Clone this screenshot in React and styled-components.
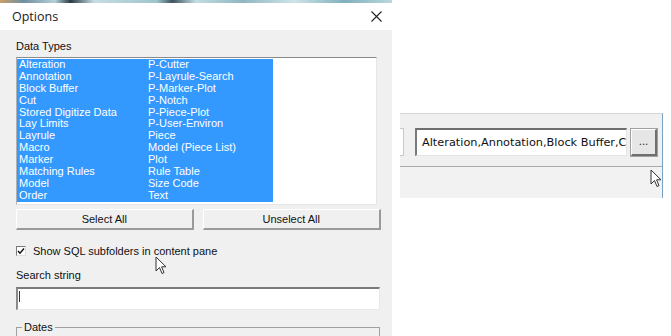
import React from "react";
import styled, { createGlobalStyle } from "styled-components";

const Global = createGlobalStyle`
  html, body { margin: 0; padding: 0; background: #fff; }
  #root { width: 671px; height: 336px; overflow: hidden; }
`;

const UI = `"Liberation Sans", Arial, sans-serif`;

const Page = styled.div`
  position: relative;
  display: flex;
  width: 671px;
  height: 336px;
  background: #fff;
  overflow: hidden;
  font-family: ${UI};
`;

const Dialog = styled.div`
  width: 392px;
  height: 336px;
  display: flex;
  flex-direction: column;
  overflow: hidden;
`;

const TopStrip = styled.div`
  flex-shrink: 0;
  height: 3px;
  background: linear-gradient(90deg, #c9a06a 0%, #6f8fa0 6%, #b5cfd8 14%, #2b3b44 18%, #c7dde3 24%, #9fc4cd 40%, #3e5560 44%, #c4dce2 50%, #8fb7c2 62%, #cfe3e7 75%, #7fb0bd 88%, #bcd8de 100%);
`;

const TitleBar = styled.div`
  flex-shrink: 0;
  height: 27px;
  display: flex;
  align-items: center;
  justify-content: space-between;
  padding: 0 10px 0 12px;
  background: #fff;
`;

const Title = styled.span`
  font-family: "Open Sans", "Noto Sans", sans-serif;
  font-size: 12.5px;
  color: #1a1a1a;
`;

const Body = styled.div`
  flex: 1 0 auto;
  background: #f0f0f0;
  padding: 9px 11px 0 16px;
  display: flex;
  flex-direction: column;
`;

const Label = styled.div`
  flex-shrink: 0;
  font-size: 11px;
  line-height: 14px;
  color: #111;
  margin-top: ${(p) => p.$mt || 0}px;
`;

const ListBox = styled.div`
  flex-shrink: 0;
  margin-top: 4px;
  width: 361px;
  height: 148px;
  box-sizing: border-box;
  background: #fff;
  border-top: 1px solid #8a8a8a;
  border-left: 1px solid #b0b0b0;
  border-right: 1px solid #e6e6e6;
  border-bottom: 1px solid #e6e6e6;
  padding-top: 1px;
`;

const Selection = styled.div`
  width: 256px;
  display: grid;
  grid-template-columns: 129px 1fr;
  grid-auto-flow: column;
  grid-template-rows: repeat(12, 11.9px);
  background: #3399ff;
`;

const Item = styled.div`
  color: #fff;
  font-size: 11px;
  line-height: 11.9px;
  padding-left: 2px;
  white-space: nowrap;
`;

const ButtonRow = styled.div`
  flex-shrink: 0;
  margin-top: 4px;
  display: flex;
  gap: 9px;
`;

const Button = styled.div`
  width: ${(p) => p.$w}px;
  height: 21px;
  box-sizing: border-box;
  display: flex;
  align-items: center;
  justify-content: center;
  font-size: 11px;
  color: #111;
  background: #f0f0f0;
  border-top: 1px solid #fff;
  border-left: 1px solid #fff;
  border-right: 2px solid #9a9a9a;
  border-bottom: 2px solid #9a9a9a;
`;

const CheckRow = styled.div`
  flex-shrink: 0;
  margin-top: 15px;
  display: flex;
  align-items: center;
  gap: 7px;
  font-size: 11px;
  color: #111;
  height: 11px;
`;

const Box = styled.div`
  width: 10px;
  height: 10px;
  box-sizing: border-box;
  background: #fff;
  border-top: 1px solid #7a7a7a;
  border-left: 1px solid #7a7a7a;
  border-right: 1px solid #dcdcdc;
  border-bottom: 1px solid #dcdcdc;
  display: flex;
  align-items: center;
  justify-content: center;
`;

const TextInput = styled.div`
  flex-shrink: 0;
  margin-top: 5px;
  width: 364px;
  height: 23px;
  box-sizing: border-box;
  background: #fff;
  border-top: 2px solid #7a7a7a;
  border-left: 2px solid #8a8a8a;
  border-right: 1px solid #e8e8e8;
  border-bottom: 1px solid #e8e8e8;
  position: relative;
`;

const Caret = styled.div`
  position: absolute;
  left: 1px;
  top: 2px;
  width: 1px;
  height: 11px;
  background: #333;
`;

const Group = styled.div`
  flex-shrink: 0;
  margin-top: 17px;
  width: 364px;
  height: 20px;
  box-sizing: border-box;
  border-top: 1px solid #a0a0a0;
  border-left: 1px solid #a0a0a0;
  border-right: 1px solid #a0a0a0;
`;

const Legend = styled.span`
  display: inline-block;
  margin: -8px 0 0 5px;
  padding: 0 2px;
  background: #f0f0f0;
  font-size: 11px;
  line-height: 14px;
  color: #111;
  vertical-align: top;
`;

const RightPane = styled.div`
  flex: 1;
  padding: 113px 0 0 8px;
`;

const Strip = styled.div`
  width: 262px;
  border-top: 1px solid #d6d6d6;
  border-right: 1px solid #7ba3c0;
  display: flex;
  flex-direction: column;
`;

const StripTop = styled.div`
  height: 53px;
  background: #f0f0f0;
  border-bottom: 1px solid #a9a9a9;
  display: flex;
  align-items: center;
  padding-top: 4px;
  box-sizing: border-box;
`;

const StubBox = styled.div`
  width: 4px;
  height: 28px;
  box-sizing: border-box;
  background: #fff;
  border: 1px solid #c8c8c8;
  border-left: none;
  margin-right: 11px;
`;

const Field = styled.div`
  width: 212px;
  height: 28px;
  box-sizing: border-box;
  background: #fff;
  border-top: 2px solid #6e6e6e;
  border-left: 2px solid #7a7a7a;
  border-right: 1px solid #e4e4e4;
  border-bottom: 1px solid #e4e4e4;
  font-family: "DejaVu Sans", Tahoma, sans-serif;
  font-size: 11.3px;
  color: #111;
  display: flex;
  align-items: center;
  padding-left: 5px;
  white-space: nowrap;
  overflow: hidden;
`;

const Dots = styled.div`
  margin-left: 4px;
  width: 26px;
  height: 27px;
  box-sizing: border-box;
  background: #e6e6e6;
  border: 1px solid #fff;
  border-right: 2px solid #6f6f6f;
  border-bottom: 2px solid #6f6f6f;
  outline: 1px solid #a0a0a0;
  display: flex;
  align-items: flex-end;
  justify-content: center;
  padding-bottom: 7px;
  font-family: "DejaVu Sans", sans-serif;
  font-size: 10px;
  color: #222;
`;

const StripBottom = styled.div`
  height: 31px;
  background: #f2f2f2;
`;

const Cursor = styled.svg`
  position: absolute;
  left: ${(p) => p.$x}px;
  top: ${(p) => p.$y}px;
`;

const Pointer = ({ x, y }) => (
  <Cursor $x={x} $y={y} width="12" height="19" viewBox="0 0 12 19">
    <path d="M1 1 L1 15 L4.5 11.5 L7 17.5 L9 16.6 L6.6 10.8 L11 10.8 Z" fill="#fff" stroke="#333" strokeWidth="1" strokeLinejoin="round" />
  </Cursor>
);

const col1 = ["Alteration", "Annotation", "Block Buffer", "Cut", "Stored Digitize Data", "Lay Limits", "Layrule", "Macro", "Marker", "Matching Rules", "Model", "Order"];
const col2 = ["P-Cutter", "P-Layrule-Search", "P-Marker-Plot", "P-Notch", "P-Piece-Plot", "P-User-Environ", "Piece", "Model (Piece List)", "Plot", "Rule Table", "Size Code", "Text"];

export default function App() {
  return (
    <Page>
      <Global />
      <Dialog>
        <TopStrip />
        <TitleBar>
          <Title>Options</Title>
          <svg width="11" height="11" viewBox="0 0 11 11">
            <path d="M0.5 0.5 L10.5 10.5 M10.5 0.5 L0.5 10.5" stroke="#222" strokeWidth="1.1" />
          </svg>
        </TitleBar>
        <Body>
          <Label>Data Types</Label>
          <ListBox>
            <Selection>
              {[...col1, ...col2].map((t) => (
                <Item key={t}>{t}</Item>
              ))}
            </Selection>
          </ListBox>
          <ButtonRow>
            <Button $w={178}>Select All</Button>
            <Button $w={179}>Unselect All</Button>
          </ButtonRow>
          <CheckRow>
            <Box>
              <svg width="8" height="8" viewBox="0 0 8 8">
                <path d="M1 4 L3 6.2 L7 1.5" fill="none" stroke="#111" strokeWidth="1.4" />
              </svg>
            </Box>
            Show SQL subfolders in content pane
          </CheckRow>
          <Label $mt={12}>Search string</Label>
          <TextInput>
            <Caret />
          </TextInput>
          <Group>
            <Legend>Dates</Legend>
          </Group>
        </Body>
      </Dialog>
      <RightPane>
        <Strip>
          <StripTop>
            <StubBox />
            <Field>Alteration,Annotation,Block Buffer,C</Field>
            <Dots>...</Dots>
          </StripTop>
          <StripBottom />
        </Strip>
      </RightPane>
      <Pointer x={155} y={256} />
      <Pointer x={650} y={169} />
    </Page>
  );
}
